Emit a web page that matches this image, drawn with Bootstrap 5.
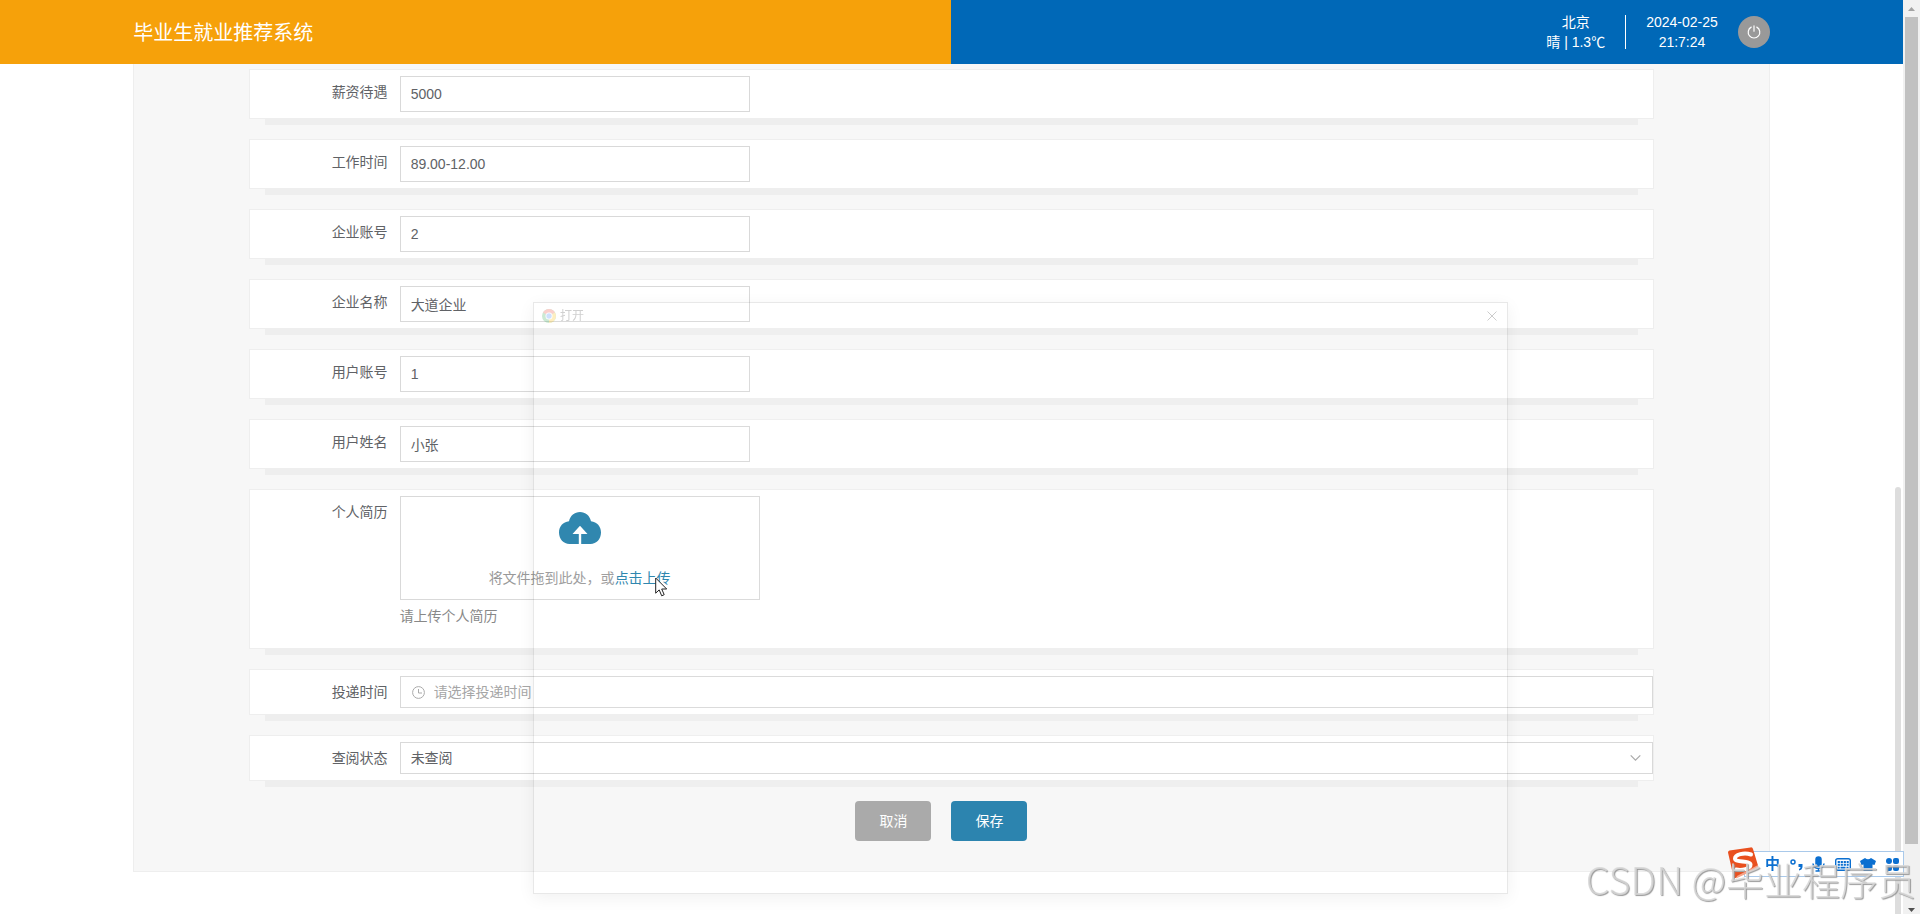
<!DOCTYPE html>
<html lang="zh-CN">
<head>
<meta charset="utf-8">
<meta name="viewport" content="width=device-width, initial-scale=1">
<title>毕业生就业推荐系统</title>
<link href="https://cdn.jsdelivr.net/npm/bootstrap@5.3.0/dist/css/bootstrap.min.css" rel="stylesheet">
<style>
  body { font-family: "Liberation Sans", "Noto Sans CJK SC", sans-serif; font-size: 14px; line-height: 20px; color: #606266; background: #fff; }
  .site-head { height: 64px; padding: 0 7%; background: linear-gradient(90deg, #f6a10a 50%, #0068b7 50%); color: #fff; }
  .site-title { font-size: 20px; line-height: 28px; padding-top: 2px; }
  .weather-box { border-right: 1px solid #fff; height: 34px; padding-right: 20px; margin-right: 20px; }
  .weather-box > div { margin-top: -3px; }
  .power-btn { width: 32px; height: 32px; background: #999; color: #fff; margin-left: 20px; }
  .sheet { width: 86%; background: #f7f7f7; border: 1px solid #eee; border-top: 0; padding: 5px 0 30px; }
  .sheet form { width: 86%; }
  .field { background: #fff; border: 1px solid #eee; padding: 6px 0; margin-bottom: 20px; box-shadow: 0 22px 0 -16px #eee; }
  .field-name { width: 150px; padding-right: 12px; line-height: 32px; text-align: right; flex: none; }
  .form-control, .form-select { border: 1px solid #d9d9d9; border-radius: 0; font-size: 14px; line-height: 20px; color: #606266; padding: 0 10px; height: 32px; background-color: #fff; }
  .form-select { background-image: none; }
  .form-control::placeholder { color: #a6a6a6; }
  .short-input { width: 350px; height: 36px; }
  .time-input { padding-left: 33px; }
  .in-icon-start { left: 12px; top: 10px; }
  .in-icon-end { right: 12px; top: 12px; }
  .drop-area { width: 360px; height: 104px; border: 1px solid #d9d9d9; padding-top: 15px; color: #999; cursor: pointer; }
  .drop-area a, .drop-area svg { color: #2480aa; }
  .upload-tip { color: #888; margin: 6px 0 16px; }
  .form-btn { height: 40px; padding: 0 24px; border: 0; border-radius: 4px; font-size: 14px; color: #fff; margin-right: 20px; }
  .btn-cancel { background: #a5a5a5; }
  .btn-save { background: #1f7dab; }
  .scroll-track { width: 17px; background: #f1f1f1; flex: none; padding: 0 2px; }
  .scroll-cap { height: 17px; }
  .scroll-thumb { background: #c1c1c1; flex: none; height: 90.5%; }
  .inner-thumb { right: 19px; top: 487px; bottom: 0; width: 6px; background: #ddd; border-radius: 3px 3px 0 0; }
  .open-dialog { left: 533px; top: 302px; width: 975px; height: 592px; background: rgba(255,255,255,.06); border: 1px solid rgba(0,0,0,.09); box-shadow: 0 4px 16px rgba(0,0,0,.06); z-index: 5; pointer-events: none; }
  .open-dialog header { font-size: 12px; line-height: 16px; padding: 5px 10px 5px 8px; color: #d0d0d0; }
  .pointer-mark { left: 655px; top: 577px; z-index: 7; }
  .ime-bar { right: 16px; bottom: 37px; height: 26px; width: 160px; background: rgba(255,255,255,.95); border: 1px solid #a9c9ea; color: #0b6fd0; padding: 0 4px 0 20px; z-index: 6; }
  .ime-logo { left: -18px; top: -5px; }
  .ime-zh { font-size: 15px; font-weight: 700; }
  .site-mark { right: 4px; bottom: 7px; font-family: "Noto Sans CJK SC", sans-serif; font-weight: 300; font-size: 38px; line-height: 56px; color: rgba(215,215,215,.85); text-shadow: 1px 1px 1px #999; z-index: 8; pointer-events: none; }
</style>
</head>
<body class="vh-100 overflow-hidden d-flex">
<div class="flex-grow-1 overflow-hidden">
  <header class="site-head d-flex align-items-center justify-content-between">
    <div class="site-title">毕业生就业推荐系统</div>
    <div class="d-flex align-items-center text-center">
      <div class="weather-box"><div>北京<br>晴 | 1.3℃</div></div>
      <div>2024-02-25<br>21:7:24</div>
      <button type="button" class="power-btn btn rounded-circle border-0 p-0 d-flex align-items-center justify-content-center" aria-label="退出">
        <svg width="14" height="14" viewBox="0 0 14 14" fill="none" stroke="currentColor" stroke-width="1.2" stroke-linecap="round"><path d="M7 .8v5.4M4.2 2.1a5.8 5.8 0 1 0 5.6 0"/></svg>
      </button>
    </div>
  </header>

  <main class="sheet mx-auto">
    <form class="mx-auto">
      <div class="field d-flex"><label class="field-name" for="pay">薪资待遇</label><input id="pay" class="form-control short-input" value="5000"></div>
      <div class="field d-flex"><label class="field-name" for="hours">工作时间</label><input id="hours" class="form-control short-input" value="89.00-12.00"></div>
      <div class="field d-flex"><label class="field-name" for="firm">企业账号</label><input id="firm" class="form-control short-input" value="2"></div>
      <div class="field d-flex"><label class="field-name" for="firmName">企业名称</label><input id="firmName" class="form-control short-input" value="大道企业"></div>
      <div class="field d-flex"><label class="field-name" for="user">用户账号</label><input id="user" class="form-control short-input" value="1"></div>
      <div class="field d-flex"><label class="field-name" for="userName">用户姓名</label><input id="userName" class="form-control short-input" value="小张"></div>
      <div class="field d-flex">
        <label class="field-name" for="resume">个人简历</label>
        <div>
          <div class="drop-area text-center">
            <svg class="d-block mx-auto mb-4" width="42" height="32" viewBox="0 0 42 32"><path fill="currentColor" d="M10 9.3C11.200 3.600 15.600 0 21 0s9.800 3.600 11 9.300C38 9.900 42 14.600 42 20.500 42 27 37.500 32 31.500 32H22.200V22h6.300L21 13.800 13.500 22h6.300v10H10.500C4.500 32 0 27 0 20.500 0 14.600 4 9.900 10 9.300z"/></svg>
            将文件拖到此处，或<a href="#" class="text-decoration-none">点击上传</a>
          </div>
          <input type="file" id="resume" class="d-none">
          <div class="upload-tip">请上传个人简历</div>
        </div>
      </div>
      <div class="field d-flex">
        <label class="field-name" for="sent">投递时间</label>
        <div class="position-relative flex-grow-1">
          <input id="sent" class="form-control time-input" placeholder="请选择投递时间">
          <svg class="in-icon-start position-absolute" width="13" height="13" viewBox="0 0 13 13" fill="none" stroke="#aaa"><circle cx="6.500" cy="6.500" r="5.900"/><path d="M6.500 3v4H10"/></svg>
        </div>
      </div>
      <div class="field d-flex">
        <label class="field-name" for="state">查阅状态</label>
        <div class="position-relative flex-grow-1">
          <select id="state" class="form-select"><option>未查阅</option><option>已查阅</option></select>
          <svg class="in-icon-end position-absolute" width="11" height="8" viewBox="0 0 11 8" fill="none" stroke="#aaa" stroke-width="1.200"><path d="M.7 1.300 5.500 6.200 10.300 1.300"/></svg>
        </div>
      </div>
      <div class="d-flex justify-content-center">
        <button type="button" class="btn form-btn btn-cancel">取消</button>
        <button type="button" class="btn form-btn btn-save">保存</button>
      </div>
    </form>
  </main>
</div>

<div class="scroll-track d-flex flex-column" aria-hidden="true">
  <svg class="scroll-cap flex-shrink-0" width="13" viewBox="0 0 13 17"><path fill="#a3a3a3" d="M3 11h7L6.500 7z"/></svg>
  <div class="scroll-thumb"></div>
  <svg class="scroll-cap flex-shrink-0 mt-auto" width="13" viewBox="0 0 13 17"><path fill="#505050" d="M3 11h7l-3.500 4z"/></svg>
</div>
<div class="inner-thumb position-fixed" aria-hidden="true"></div>

<section class="open-dialog position-fixed" aria-label="打开">
  <header class="d-flex align-items-center">
    <svg width="14" height="14" viewBox="0 0 14 14" opacity=".25"><circle cx="7" cy="7" r="7" fill="#34a853"/><path fill="#ea4335" d="M7 7 1 3.400A7 7 0 0 1 13 3.500z"/><path fill="#fbbc05" d="M7 7l6-3.500A7 7 0 0 1 7 14z"/><circle cx="7" cy="7" r="3.500" fill="#fff"/><circle cx="7" cy="7" r="2.700" fill="#4285f4"/></svg>
    <span class="ps-1">打开</span>
    <svg class="ms-auto" width="10" height="10" viewBox="0 0 10 10" stroke="#ccc"><path d="M.5.5l9 9M9.500.5l-9 9"/></svg>
  </header>
</section>

<svg class="pointer-mark position-fixed" width="13" height="20" viewBox="0 0 13 20" aria-hidden="true"><path d="M.7 1v15.200l3.500-3.300 2.500 5.900 2.500-1.100-2.500-5.700h5z" fill="#fff" stroke="#222"/></svg>

<div class="ime-bar position-fixed d-flex align-items-center justify-content-between">
  <svg class="ime-logo position-absolute" width="33" height="32" viewBox="0 0 33 32"><path fill="#e9501f" d="M1 5.500Q1 4 2.500 3.600L23.500.4Q25.500 0 26 2l5 16.500Q31.500 20 30.300 21L8.500 31Q7 31.500 6.500 29.500z"/><path fill="none" stroke="#fff" stroke-width="4" stroke-linecap="round" d="M24 7.500C17 5 8 7.500 8 11.500c0 4.500 15 1.500 15.500 6 .2 4-8.500 6.500-14.500 5"/><path fill="#f5a48a" d="M10 29l21-11 .5 3L9 31.500z"/></svg>
  <span class="ime-zh">中</span>
  <svg width="13" height="13" viewBox="0 0 13 13"><circle cx="3" cy="4" r="2" fill="none" stroke="currentColor" stroke-width="1.500"/><path fill="currentColor" d="M8.500 6h4v3q-.5 3-3.500 3.500v-1.500q1.500-.5 1.500-2h-2z"/></svg>
  <svg width="13" height="16" viewBox="0 0 13 16" fill="none" stroke="currentColor" stroke-width="1.500"><rect x="4" y="1" width="5" height="9" rx="2.500" fill="currentColor"/><path d="M1 7.500q.5 5 5.500 5t5.500-5M6.500 12.500V15M3.500 15h6"/></svg>
  <svg width="16" height="13" viewBox="0 0 16 13"><rect x=".7" y=".7" width="14.600" height="11.600" rx="2" fill="none" stroke="currentColor" stroke-width="1.400"/><path stroke="currentColor" stroke-width="2" stroke-dasharray="2.200 .8" d="M2.700 3.900h11M2.700 6.700h11"/><path stroke="currentColor" stroke-width="1.800" d="M2.700 9.600h2M5.500 9.600h5M11.500 9.600h2"/></svg>
  <svg width="16" height="13" viewBox="0 0 16 13"><path fill="currentColor" d="M5 0q3 2.500 6 0l5 3-1.500 4-2-.5V13h-9V6.500l-2 .5L0 3z"/></svg>
  <svg width="13" height="13" viewBox="0 0 13 13" fill="currentColor"><circle cx="3" cy="3" r="3"/><rect x="7" width="6" height="6" rx="2"/><rect y="7" width="6" height="6" rx="2"/><rect x="7" y="7" width="6" height="6" rx="2"/></svg>
</div>
<div class="site-mark position-fixed text-nowrap">CSDN @毕业程序员</div>
<script src="https://cdn.jsdelivr.net/npm/bootstrap@5.3.0/dist/js/bootstrap.bundle.min.js"></script>
</body>
</html>
